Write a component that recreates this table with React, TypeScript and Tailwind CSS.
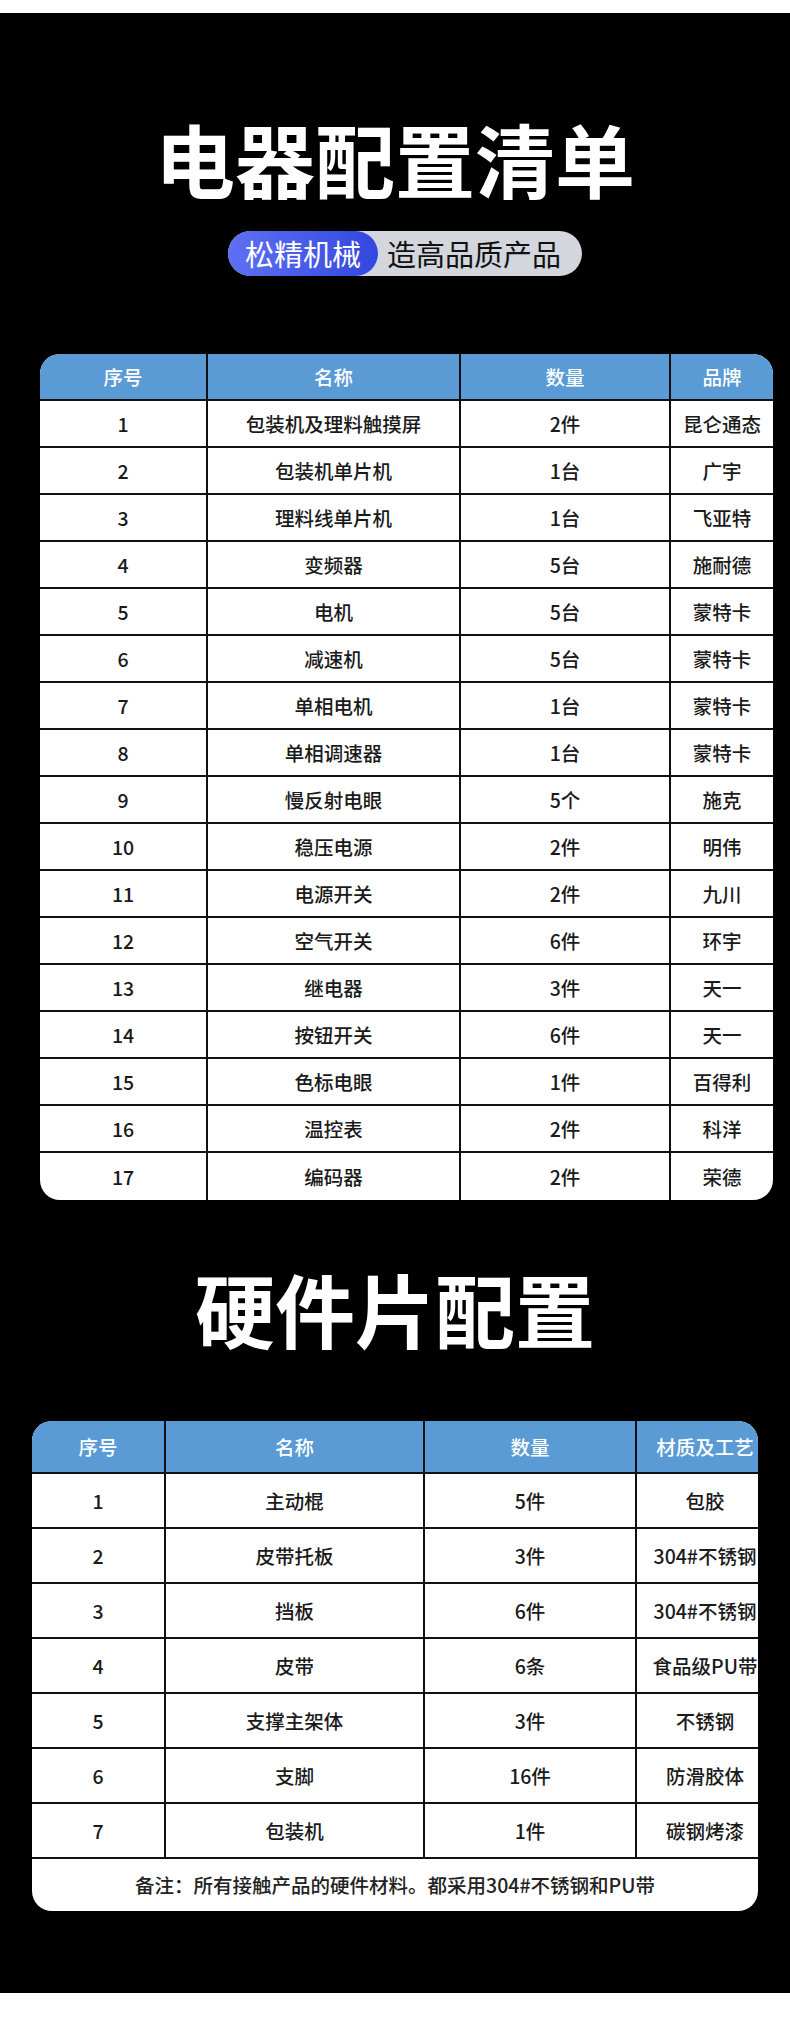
const electrical = [
  ['1', '包装机及理料触摸屏', '2件', '昆仑通态'],
  ['2', '包装机单片机', '1台', '广宇'],
  ['3', '理料线单片机', '1台', '飞亚特'],
  ['4', '变频器', '5台', '施耐德'],
  ['5', '电机', '5台', '蒙特卡'],
  ['6', '减速机', '5台', '蒙特卡'],
  ['7', '单相电机', '1台', '蒙特卡'],
  ['8', '单相调速器', '1台', '蒙特卡'],
  ['9', '慢反射电眼', '5个', '施克'],
  ['10', '稳压电源', '2件', '明伟'],
  ['11', '电源开关', '2件', '九川'],
  ['12', '空气开关', '6件', '环宇'],
  ['13', '继电器', '3件', '天一'],
  ['14', '按钮开关', '6件', '天一'],
  ['15', '色标电眼', '1件', '百得利'],
  ['16', '温控表', '2件', '科洋'],
  ['17', '编码器', '2件', '荣德'],
];

const hardware = [
  ['1', '主动棍', '5件', '包胶'],
  ['2', '皮带托板', '3件', '304#不锈钢'],
  ['3', '挡板', '6件', '304#不锈钢'],
  ['4', '皮带', '6条', '食品级PU带'],
  ['5', '支撑主架体', '3件', '不锈钢'],
  ['6', '支脚', '16件', '防滑胶体'],
  ['7', '包装机', '1件', '碳钢烤漆'],
];

function Cell({ text, last }: { text: string; last?: boolean }) {
  return (
    <div
      className={
        'flex items-center justify-center whitespace-nowrap ' +
        (last ? '' : 'border-r-2 border-[#111]')
      }
    >
      {text}
    </div>
  );
}

function ElectricalTable() {
  const cols = 'grid grid-cols-[168px_253px_210px_102px]';
  return (
    <div className="ml-[40px] w-[733px] overflow-hidden rounded-[20px] bg-white text-[19.5px] font-medium text-[#1a1a1a]">
      <div className={cols + ' h-[47px] border-b-2 border-[#111] bg-[#5b9bd5] text-white'}>
        <Cell text="序号" />
        <Cell text="名称" />
        <Cell text="数量" />
        <Cell text="品牌" last />
      </div>
      {electrical.map((r, i) => (
        <div
          key={r[0]}
          className={cols + ' h-[47px] ' + (i < electrical.length - 1 ? 'border-b-2 border-[#111]' : '')}
        >
          <Cell text={r[0]} />
          <Cell text={r[1]} />
          <Cell text={r[2]} />
          <Cell text={r[3]} last />
        </div>
      ))}
    </div>
  );
}

function HardwareTable() {
  const cols = 'grid w-[741px] grid-cols-[134px_259px_212px_136px]';
  return (
    <div className="ml-[32px] w-[726px] overflow-hidden rounded-[20px] bg-white text-[19.5px] font-medium text-[#1a1a1a]">
      <div className={cols + ' h-[53px] border-b-2 border-[#111] bg-[#5b9bd5] text-white'}>
        <Cell text="序号" />
        <Cell text="名称" />
        <Cell text="数量" />
        <Cell text="材质及工艺" last />
      </div>
      {hardware.map((r) => (
        <div key={r[0]} className={cols + ' h-[55px] border-b-2 border-[#111]'}>
          <Cell text={r[0]} />
          <Cell text={r[1]} />
          <Cell text={r[2]} />
          <Cell text={r[3]} last />
        </div>
      ))}
      <div className="flex h-[52px] items-center justify-center text-[#222]">
        备注：所有接触产品的硬件材料。都采用304#不锈钢和PU带
      </div>
    </div>
  );
}

export default function App() {
  return (
    <div className="flex w-[790px] flex-col bg-black font-['Noto_Sans_CJK_SC','Noto_Sans',sans-serif]">
      <div className="h-[13px] bg-white" />

      <h1 className="mt-[104px] text-center text-[80px] font-semibold leading-[80px] text-white">
        电器配置清单
      </h1>

      <div className="mt-[34px] flex justify-center pl-[20px]">
        <div className="flex h-[45px] w-[354px] items-center rounded-full bg-[#d3d6dc]">
          <div className="flex h-full w-[150px] items-center justify-center rounded-full bg-gradient-to-r from-[#5f70f2] to-[#3346df] text-[29px] text-white">
            松精机械
          </div>
          <div className="pl-[9px] text-[29px] text-[#111]">造高品质产品</div>
        </div>
      </div>

      <div className="mt-[78px]">
        <ElectricalTable />
      </div>

      <h2 className="mt-[67px] text-center text-[80px] font-semibold leading-[80px] text-white">
        硬件片配置
      </h2>

      <div className="mt-[74px]">
        <HardwareTable />
      </div>

      <div className="h-[82px]" />
      <div className="h-[21px] bg-white" />
    </div>
  );
}
